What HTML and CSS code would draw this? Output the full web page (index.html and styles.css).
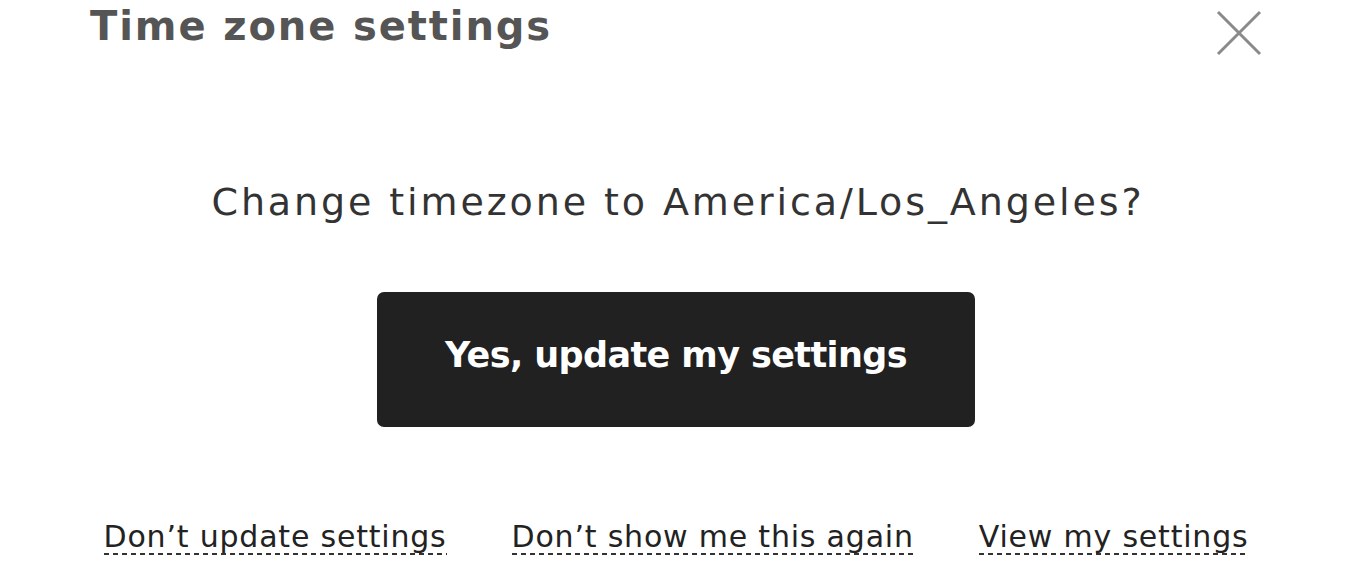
FILE: index.html
```html
<!DOCTYPE html>
<html lang="en">
<head>
<meta charset="utf-8">
<title>Time zone settings</title>
<link rel="stylesheet" href="styles.css">
</head>
<body>
<div class="dialog">
  <header class="dialog-header">
    <h1 class="dialog-title">Time zone settings</h1>
    <button class="close" aria-label="Close">
      <svg width="46" height="46" viewBox="0 0 46 46"><path d="M2 2 L44 44 M44 2 L2 44" stroke="#8a8a8a" stroke-width="3" fill="none"/></svg>
    </button>
  </header>
  <main class="dialog-body">
    <p class="question">Change timezone to America/Los_Angeles?</p>
    <button class="primary">Yes, update my settings</button>
    <nav class="links">
      <a href="#" class="link">Don’t update settings</a>
      <a href="#" class="link">Don’t show me this again</a>
      <a href="#" class="link">View my settings</a>
    </nav>
  </main>
</div>
</body>
</html>
```
FILE: styles.css
```css
* { box-sizing: border-box; }
html, body { margin: 0; padding: 0; background: #fff; }
body { font-family: "DejaVu Sans", sans-serif; width: 1360px; height: 566px; overflow: hidden; }
.dialog { padding: 0 98px 0 90px; }
.dialog-header { display: flex; justify-content: space-between; align-items: flex-start; height: 146px; }
.dialog-title { margin: 0; padding-top: 2px; font-size: 40px; font-weight: 700; color: #555; line-height: 48px; letter-spacing: 1.9px; }
.close { border: 0; background: none; padding: 0; margin-top: 10px; width: 46px; height: 46px; cursor: pointer; }
.close svg { display: block; }
.dialog-body { display: flex; flex-direction: column; align-items: center; margin-left: -90px; margin-right: -98px; }
.question { margin: 31px 0 0; padding-right: 4px; font-size: 38px; color: #333; line-height: 50px; letter-spacing: 2.9px; }
.primary { margin: 65px 8px 0 0; width: 598px; height: 135px; padding: 0 0 10px; background: #212121; color: #fff; border: 0; border-radius: 7px; font-family: inherit; font-size: 35px; font-weight: 700; letter-spacing: -0.6px; }
.links { display: flex; gap: 65px; margin-top: 92px; padding-right: 8px; }
.link { font-size: 30px; color: #222; text-decoration: none; line-height: 36px; padding-bottom: 0; letter-spacing: 0.8px;
  background: repeating-linear-gradient(90deg, #333 0 5px, transparent 5px 9px) left bottom / 100% 2px no-repeat; }
```
